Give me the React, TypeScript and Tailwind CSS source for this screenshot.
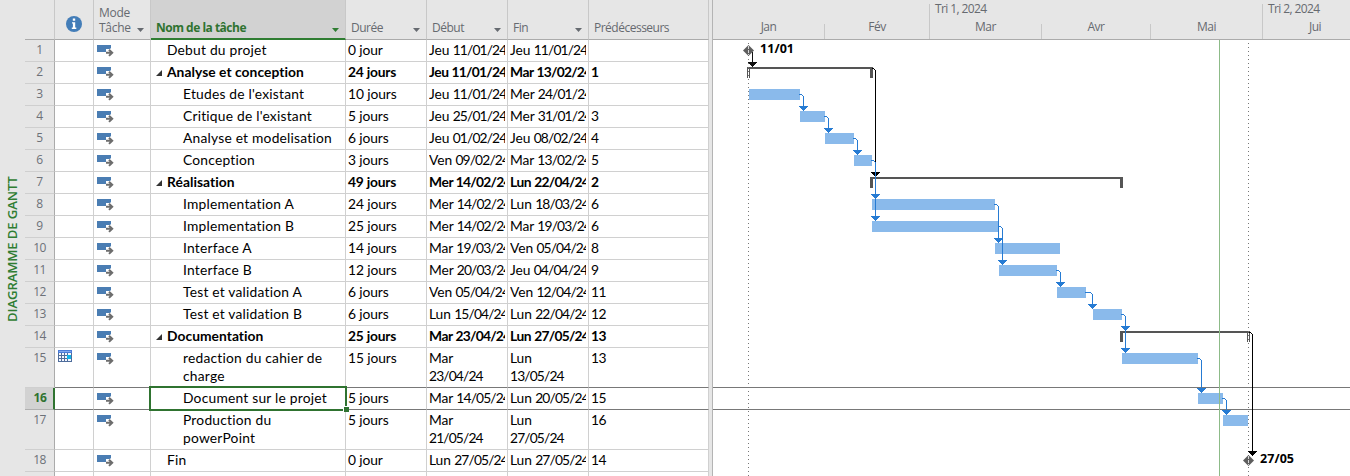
import React from "react";

type Task = {
  id: number;
  name: string;
  level: 0 | 1;
  duration: string;
  start: string;
  end: string;
  pred: string;
  summary?: boolean;
  tall?: boolean;
  calendar?: boolean;
  selected?: boolean;
};

const tasks: Task[] = [
  { id: 1, name: "Debut du projet", level: 0, duration: "0 jour", start: "Jeu 11/01/24", end: "Jeu 11/01/24", pred: "" },
  { id: 2, name: "Analyse et conception", level: 0, duration: "24 jours", start: "Jeu 11/01/24", end: "Mar 13/02/24", pred: "1", summary: true },
  { id: 3, name: "Etudes de l'existant", level: 1, duration: "10 jours", start: "Jeu 11/01/24", end: "Mer 24/01/24", pred: "" },
  { id: 4, name: "Critique de l'existant", level: 1, duration: "5 jours", start: "Jeu 25/01/24", end: "Mer 31/01/24", pred: "3" },
  { id: 5, name: "Analyse et modelisation", level: 1, duration: "6 jours", start: "Jeu 01/02/24", end: "Jeu 08/02/24", pred: "4" },
  { id: 6, name: "Conception", level: 1, duration: "3 jours", start: "Ven 09/02/24", end: "Mar 13/02/24", pred: "5" },
  { id: 7, name: "Réalisation", level: 0, duration: "49 jours", start: "Mer 14/02/24", end: "Lun 22/04/24", pred: "2", summary: true },
  { id: 8, name: "Implementation A", level: 1, duration: "24 jours", start: "Mer 14/02/24", end: "Lun 18/03/24", pred: "6" },
  { id: 9, name: "Implementation B", level: 1, duration: "25 jours", start: "Mer 14/02/24", end: "Mar 19/03/24", pred: "6" },
  { id: 10, name: "Interface A", level: 1, duration: "14 jours", start: "Mar 19/03/24", end: "Ven 05/04/24", pred: "8" },
  { id: 11, name: "Interface B", level: 1, duration: "12 jours", start: "Mer 20/03/24", end: "Jeu 04/04/24", pred: "9" },
  { id: 12, name: "Test et validation A", level: 1, duration: "6 jours", start: "Ven 05/04/24", end: "Ven 12/04/24", pred: "11" },
  { id: 13, name: "Test et validation B", level: 1, duration: "6 jours", start: "Lun 15/04/24", end: "Lun 22/04/24", pred: "12" },
  { id: 14, name: "Documentation", level: 0, duration: "25 jours", start: "Mar 23/04/24", end: "Lun 27/05/24", pred: "13", summary: true },
  { id: 15, name: "redaction du cahier de\ncharge", level: 1, duration: "15 jours", start: "Mar\n23/04/24", end: "Lun\n13/05/24", pred: "13", tall: true, calendar: true },
  { id: 16, name: "Document sur le projet", level: 1, duration: "5 jours", start: "Mar 14/05/24", end: "Lun 20/05/24", pred: "15", selected: true },
  { id: 17, name: "Production du\npowerPoint", level: 1, duration: "5 jours", start: "Mar\n21/05/24", end: "Lun\n27/05/24", pred: "16", tall: true },
  { id: 18, name: "Fin", level: 0, duration: "0 jour", start: "Lun 27/05/24", end: "Lun 27/05/24", pred: "14" },
];

const COLS = "grid grid-cols-[30px_39px_57px_195px_81px_81px_81px_120px]";

function Caret({ green = false }: { green?: boolean }) {
  return (
    <svg width="7" height="4" viewBox="0 0 7 4" className={green ? "mb-[6px] shrink-0 fill-[#2f7d32]" : "mb-[7px] shrink-0 fill-[#666a70]"}>
      <path d="M0 0h7L3.5 4z" />
    </svg>
  );
}

function HeaderCell({ label, caret = true }: { label: string; caret?: boolean }) {
  return (
    <div className="flex items-end justify-between border-r border-b border-r-[#c8c8c8] border-b-[#ababab] pr-[6px] pl-[5px]">
      <span className="pb-[3px] leading-[16px]">{label}</span>
      {caret && <Caret />}
    </div>
  );
}

function ModeIcon() {
  return (
    <svg width="18" height="13" viewBox="0 0 18 13">
      <path d="M0 0h14v4H9v3H0z" fill="#4a7db3" />
      <path d="M9 7.5h5.5M12 4.6l3 2.9-3 2.9" fill="none" stroke="#fff" strokeWidth="4" />
      <path d="M9 7.8h6M12 4.7l3.2 3.1-3.2 3.1" fill="none" stroke="#6d6d6d" strokeWidth="2" />
    </svg>
  );
}

function CalendarIcon() {
  return (
    <svg width="14" height="12" viewBox="0 0 14 12" shapeRendering="crispEdges">
      <rect width="14" height="12" fill="#4f6d9c" />
      <rect width="14" height="3" fill="#4a7bd8" />
      <rect x="1" y="1" width="12" height="1" fill="#7fa6ee" />
      <path
        d="M1 3h2v2H1zM4 3h2v2H4zM7 3h2v2H7zM10 3h3v2h-3zM1 6h2v2H1zM4 6h2v2H4zM7 6h2v2H7zM1 9h2v2H1zM4 9h2v2H4zM7 9h2v2H7zM10 9h3v2h-3z"
        fill="#f4f8ff"
      />
      <rect x="9" y="5" width="4" height="4" fill="#12b4e8" />
    </svg>
  );
}

function DateText({ value, bold }: { value: string; bold?: boolean }) {
  return (
    <div className={`overflow-hidden ${bold ? "tracking-[-0.4px]" : "tracking-[-0.1px]"}`}>
      {value.slice(0, 4)}
      <span className={bold ? "tracking-[-0.75px]" : "tracking-[-0.85px]"}>{value.slice(4)}</span>
    </div>
  );
}

function TaskRow({ t }: { t: Task }) {
  const dark = t.id === 15 || t.id === 16;
  const line = dark ? "border-b-[#787878]" : "border-b-[#d0d0d0]";
  const cell = `border-r border-b border-r-[#d0d0d0] ${line}`;
  const text = `${cell} overflow-hidden whitespace-pre pt-px pl-[2px] pr-[2px]`;
  return (
    <div
      className={`${COLS} ${t.tall ? "h-[40px]" : "h-[22px]"} font-['Lato',sans-serif] text-[13.8px] leading-[18px] text-black ${t.summary ? "font-bold" : ""}`}
    >
      <div
        className={`border-b text-center font-['Open_Sans',sans-serif] text-[12px] leading-[19px] ${
          t.selected
            ? "border-r-2 border-r-[#2f7330] border-b-[#b0b0b0] bg-[#d2d2d2] pl-[2px] font-bold tracking-[-0.3px] text-[#2f7330]"
            : "border-r border-r-[#ababab] border-b-[#cfcfcf] bg-[#e6e6e6] font-normal tracking-[-0.6px] text-[#6d7178]"
        }`}
      >
        {t.id}
      </div>
      <div className={`${cell} pt-[2px] pl-[3px]`}>{t.calendar && <CalendarIcon />}</div>
      <div className={`${cell} pt-[5px] pl-[3px]`}>
        <ModeIcon />
      </div>
      <div
        className={`${cell} relative flex whitespace-pre pt-px ${t.level ? "pl-[32px]" : "pl-[5px]"} ${t.selected ? "z-10" : ""} ${t.summary ? "tracking-[0.05px]" : "tracking-[0.22px]"}`}
      >
        {!t.level && (
          <span className="w-[11px] pt-[7px]">
            {t.summary && (
              <svg width="6" height="6" viewBox="0 0 6 6">
                <path d="M6 0v6H0z" fill="#333" />
              </svg>
            )}
          </span>
        )}
        <span>{t.name}</span>
        {t.selected && (
          <>
            <span className="absolute -top-[2px] -left-[2px] h-[25px] w-[198px] border-2 border-[#2f7330]" />
            <span className="absolute top-[18px] left-[192px] h-[6px] w-[6px] border-t border-l border-white bg-[#2f7330]" />
          </>
        )}
      </div>
      <div className={`${text} ${t.summary ? "tracking-[-0.2px]" : "tracking-[-0.1px]"}`}>{t.duration}</div>
      <div className={text}>
        <DateText value={t.start} bold={t.summary} />
      </div>
      <div className={text}>
        <DateText value={t.end} bold={t.summary} />
      </div>
      <div className={`${text} tracking-[-0.6px]`}>{t.pred}</div>
    </div>
  );
}

const bars: [number, number, number][] = [
  [749, 800, 89],
  [800, 825, 111],
  [825, 854, 133],
  [854, 872, 155],
  [872, 995, 199],
  [872, 999, 221],
  [995, 1060, 243],
  [999, 1057, 265],
  [1057, 1086, 287],
  [1093, 1122, 309],
  [1122, 1198, 353],
  [1198, 1223, 393],
  [1223, 1248, 415],
];

/* from x, from y, column x, arrow tips */
const links: [number, number, number, number[]][] = [
  [799, 94, 803, [111]],
  [824, 116, 828, [133]],
  [853, 138, 857, [155]],
  [871, 160, 875, [199, 221]],
  [994, 204, 998, [243]],
  [998, 226, 1002, [265]],
  [1056, 270, 1060, [287]],
  [1085, 292, 1092, [309]],
  [1121, 314, 1125, [331, 353]],
  [1197, 358, 1201, [393]],
  [1222, 398, 1226, [415]],
];

function Link({ x, y, cx, tips, color }: { x: number; y: number; cx: number; tips: number[]; color: string }) {
  return (
    <g>
      <path d={`M${x} ${y}H${cx - 1}V${y + 1}H${x}zM${cx - 1} ${y + 1}h1v1h-1zM${cx} ${y + 2}h1V${tips[tips.length - 1]}h-1z`} fill={color} />
      {tips.map((t) => (
        <path
          key={t}
          d={`M${cx - 4} ${t - 5}h9v1h-1v1h-1v1h-1v1h-1v1h-1v-1h-1v-1h-1v-1h-1v-1h-1z`}
          fill={color}
        />
      ))}
    </g>
  );
}

function Diamond({ x, y }: { x: number; y: number }) {
  return (
    <g>
      <path d={`M${x + 0.5} ${y - 5}l5.5 5.5-5.5 5.5-5.5-5.5z`} fill="#5e5e5e" />
      <path d={`M${x + 0.5} ${y - 4}v9`} stroke="#d8d8d8" strokeDasharray="3 1" />
    </g>
  );
}

function Chart() {
  return (
    <svg width="637" height="436" viewBox="713 40 637 436" shapeRendering="crispEdges" className="block bg-white">
      <path d="M713 387.5H1350M713 409.5H1350" stroke="#787878" />
      {bars.map(([a, b, y]) => (
        <rect key={y} x={a} y={y} width={b - a} height="11" fill="#8abaeb" />
      ))}
      <g fill="#555">
        <path d="M747 67h126v11h-3v-9H750v9h-3z" />
        <path d="M870 177h253v11h-3v-9H873v9h-3z" />
        <path d="M1120 331h130v11h-3v-9h-124v9h-3z" />
      </g>
      <path d="M748.5 69v9M1248.5 333v9" stroke="#fff" />
      <path d="M748.5 43V476M1248.5 43V476" stroke="#777" strokeDasharray="1 3" />
      <Link x={749} y={50} cx={752} tips={[67]} color="#111" />
      <Link x={872} y={68} cx={875} tips={[177]} color="#000" />
      <Link x={1249} y={332} cx={1252} tips={[456]} color="#000" />
      {links.map(([x, y, cx, tips]) => (
        <Link key={y} x={x} y={y} cx={cx} tips={tips} color="#267bd3" />
      ))}
      <path d="M1219.5 40V476" stroke="#8dbb88" />
      <g shapeRendering="auto">
        <Diamond x={748} y={50} />
        <Diamond x={1248} y={460} />
      </g>
      <g className="font-['Open_Sans',sans-serif] text-[12.5px] font-bold" fill="#000">
        <text x="760" y="53" textLength="33.5">11/01</text>
        <text x="1260" y="463" textLength="33.5">27/05</text>
      </g>
    </svg>
  );
}

export default function App() {
  return (
    <div className="flex h-[476px] w-[1350px] overflow-hidden bg-[#e6e6e6] font-['Open_Sans',sans-serif] text-[12px] tracking-[-0.5px] text-[#666a70]">
      <div className="flex w-[25px] shrink-0 justify-center pt-[176px]">
        <span className="h-[146px] rotate-180 text-[13.2px] leading-[25px] font-semibold tracking-[-0.14px] whitespace-nowrap text-[#2f7d32] [writing-mode:vertical-rl]">
          DIAGRAMME DE GANTT
        </span>
      </div>

      <div className="w-[684px] shrink-0 bg-white">
        <div className={`${COLS} h-[40px] bg-[#e6e6e6]`}>
          <div className="border-r border-b border-r-[#c8c8c8] border-b-[#ababab]" />
          <div className="flex justify-center border-r border-b border-r-[#c8c8c8] border-b-[#ababab] pt-[16px]">
            <svg width="16" height="16" viewBox="0 0 16 16">
              <circle cx="8" cy="8" r="8" fill="#437db8" />
              <path d="M6.8 2.6h2.4v2.2H6.8zM6 6.2h3.2v5.4h1.1V13H5.8v-1.4h1.1V7.6H6z" fill="#fff" />
            </svg>
          </div>
          <div className="flex items-end justify-between border-r border-b border-r-[#c8c8c8] border-b-[#ababab] pr-[6px] pl-[5px]">
            <span className="pb-[4px] leading-[15px] tracking-[-0.3px] whitespace-pre">{"Mode\nTâche"}</span>
            <Caret />
          </div>
          <div className="flex items-end justify-between border-r border-b-2 border-r-[#c8c8c8] border-b-[#2f7d32] bg-[#d2d2d2] pr-[6px] pl-[5px] font-bold text-[#2f7330]">
            <span className="pb-[2px] leading-[16px]">Nom de la tâche</span>
            <Caret green />
          </div>
          <HeaderCell label="Durée" />
          <HeaderCell label="Début" />
          <HeaderCell label="Fin" />
          <HeaderCell label="Prédécesseurs" caret={false} />
        </div>
        {tasks.map((t) => (
          <TaskRow key={t.id} t={t} />
        ))}
        <div className={`${COLS} h-[4px]`}>
          <div className="border-r border-[#ababab] bg-[#e6e6e6]" />
          {[0, 1, 2, 3, 4, 5, 6].map((i) => (
            <div key={i} className="border-r border-[#d0d0d0]" />
          ))}
        </div>
      </div>

      <div className="w-[4px] shrink-0 border-r border-[#b4b4b4]" />

      <div className="min-w-0 flex-1">
        <div className="flex h-[40px] items-end border-b border-[#ababab]">
          <div className="flex h-[15px] w-[112px] shrink-0 items-end justify-center border-r border-[#c8c8c8] pb-[3px]">Jan</div>
          <div className="flex h-[15px] w-[104px] shrink-0 items-end justify-center pb-[3px]">Fév</div>
          <div className="flex h-[35px] w-[333px] shrink-0 flex-col border-l border-[#c8c8c8]">
            <div className="h-[20px] pl-[5px] leading-[9px] tracking-[-0.6px]">Tri 1, 2024</div>
            <div className="flex h-[15px]">
              <div className="flex w-[112px] shrink-0 items-end justify-center border-r border-[#c8c8c8] pb-[3px]">Mar</div>
              <div className="flex w-[109px] shrink-0 items-end justify-center border-r border-[#c8c8c8] pb-[3px]">Avr</div>
              <div className="flex w-[111px] shrink-0 items-end justify-center pb-[3px]">Mai</div>
            </div>
          </div>
          <div className="flex h-[35px] min-w-0 flex-1 flex-col border-l border-[#c8c8c8]">
            <div className="h-[20px] pl-[5px] leading-[9px] tracking-[-0.6px]">Tri 2, 2024</div>
            <div className="flex h-[15px] items-end pb-[3px] pl-[46px]">Jui</div>
          </div>
        </div>
        <Chart />
      </div>
    </div>
  );
}
